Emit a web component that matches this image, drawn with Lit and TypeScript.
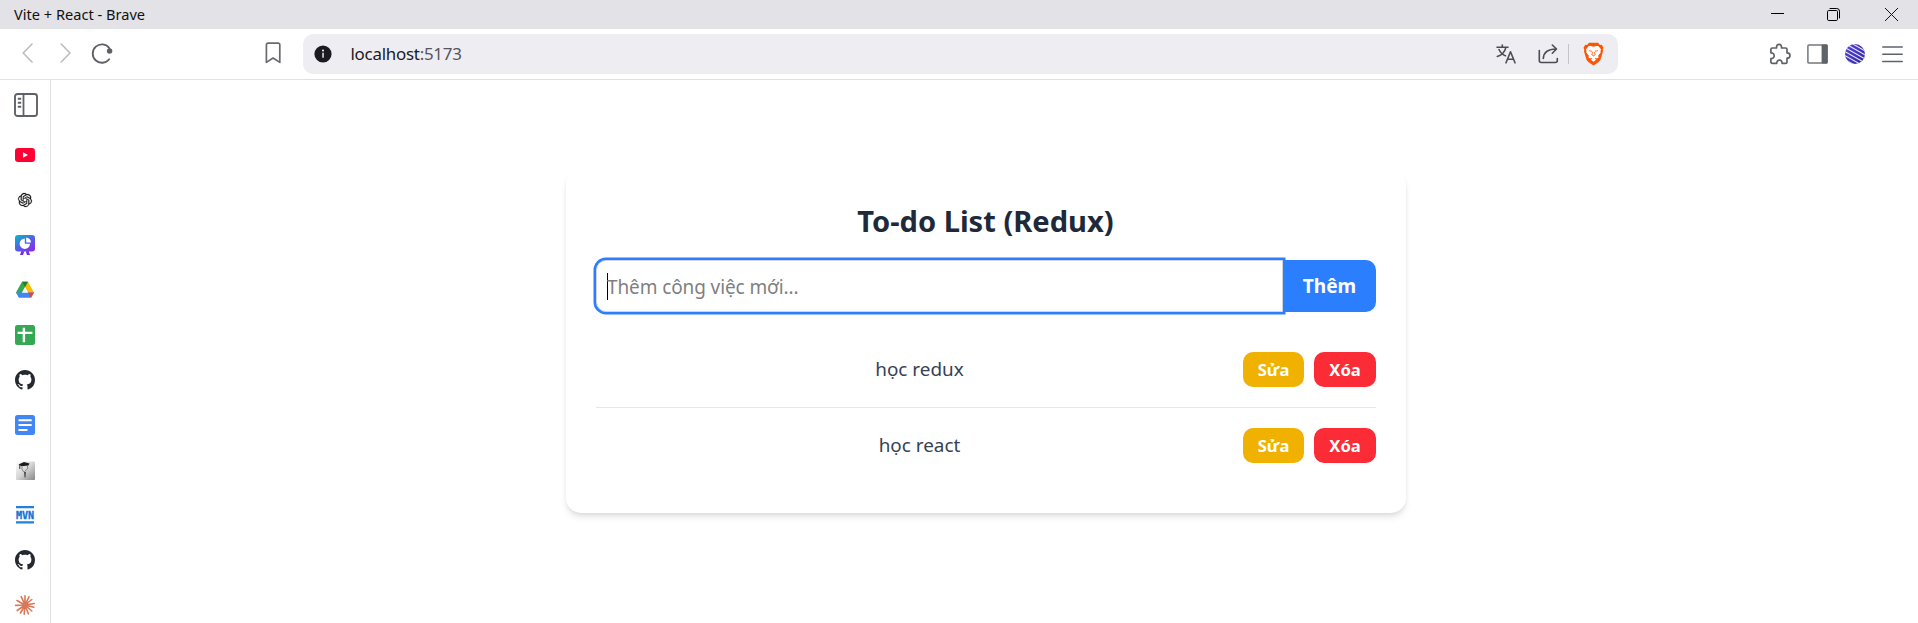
import { LitElement, html, css, svg } from "lit";
import { customElement, property, state } from "lit/decorators.js";

const GITHUB =
  "M8 0C3.58 0 0 3.58 0 8c0 3.54 2.29 6.53 5.47 7.59.4.07.55-.17.55-.38 0-.19-.01-.82-.01-1.49-2.01.37-2.53-.49-2.69-.94-.09-.23-.48-.94-.82-1.13-.28-.15-.68-.52-.01-.53.63-.01 1.08.58 1.23.82.72 1.21 1.87.87 2.33.66.07-.52.28-.87.51-1.07-1.78-.2-3.64-.89-3.64-3.95 0-.87.31-1.59.82-2.15-.08-.2-.36-1.02.08-2.12 0 0 .67-.21 2.2.82.64-.18 1.32-.27 2-.27.68 0 1.36.09 2 .27 1.53-1.04 2.2-.82 2.2-.82.44 1.1.16 1.92.08 2.12.51.56.82 1.27.82 2.15 0 3.07-1.87 3.75-3.65 3.95.29.25.54.73.54 1.48 0 1.07-.01 1.93-.01 2.2 0 .21.15.46.55.38A8.013 8.013 0 0 0 16 8c0-4.42-3.58-8-8-8z";
const KNOT =
  "M22.2819 9.8211a5.9847 5.9847 0 0 0-.5157-4.9108 6.0462 6.0462 0 0 0-6.5098-2.9A6.0651 6.0651 0 0 0 4.9807 4.1818a5.9847 5.9847 0 0 0-3.9977 2.9 6.0462 6.0462 0 0 0 .7427 7.0966 5.98 5.98 0 0 0 .511 4.9107 6.051 6.051 0 0 0 6.5146 2.9001A5.9847 5.9847 0 0 0 13.2599 24a6.0557 6.0557 0 0 0 5.7718-4.2058 5.9894 5.9894 0 0 0 3.9977-2.9001 6.0557 6.0557 0 0 0-.7475-7.0729zm-9.022 12.6081a4.4755 4.4755 0 0 1-2.8764-1.0408l.1419-.0804 4.7783-2.7582a.7948.7948 0 0 0 .3927-.6813v-6.7369l2.02 1.1686a.071.071 0 0 1 .038.052v5.5826a4.504 4.504 0 0 1-4.4945 4.4944zm-9.6607-4.1254a4.4708 4.4708 0 0 1-.5346-3.0137l.142.0852 4.783 2.7582a.7712.7712 0 0 0 .7806 0l5.8428-3.3685v2.3324a.0804.0804 0 0 1-.0332.0615L9.74 19.9502a4.4992 4.4992 0 0 1-6.1408-1.6464zM2.3408 7.8956a4.485 4.485 0 0 1 2.3655-1.9728V11.6a.7664.7664 0 0 0 .3879.6765l5.8144 3.3543-2.0201 1.1685a.0757.0757 0 0 1-.071 0l-4.8303-2.7865A4.504 4.504 0 0 1 2.3408 7.872zm16.5963 3.8558L13.1038 8.364 15.1192 7.2a.0757.0757 0 0 1 .071 0l4.8303 2.7913a4.4944 4.4944 0 0 1-.6765 8.1042v-5.6772a.79.79 0 0 0-.407-.667zm2.0107-3.0231l-.142-.0852-4.7735-2.7818a.7759.7759 0 0 0-.7854 0L9.409 9.2297V6.8974a.0662.0662 0 0 1 .0284-.0615l4.8303-2.7866a4.4992 4.4992 0 0 1 6.6802 4.66zM8.3065 12.863l-2.02-1.1638a.0804.0804 0 0 1-.038-.0567V6.0742a4.4992 4.4992 0 0 1 7.3757-3.4537l-.142.0805L8.704 5.459a.7948.7948 0 0 0-.3927.6813zm1.0976-2.3654l2.602-1.4998 2.6069 1.4998v2.9994l-2.5974 1.4997-2.6067-1.4997Z";

const line = (d: string, color = "#5f6066", w = 1.6) =>
  svg`<path d=${d} fill="none" stroke=${color} stroke-width=${w} stroke-linecap="round" stroke-linejoin="round"/>`;

// Every glyph is [width, height, shapes].
const ICONS: Record<string, [number, number, unknown]> = {
  minimize: [13, 13, svg`<rect x="0" y="5" width="13" height="1" fill="#000"/>`],
  restore: [13, 13, svg`
    <rect x=".5" y="2.5" width="10" height="10" rx="1.2" fill="none" stroke="#000"/>
    <path d="M2.6.5h7.2a2.7 2.7 0 0 1 2.7 2.7v7.2" fill="none" stroke="#000"/>`],
  close: [13, 13, line("M.3.3 12.7 12.7M12.7.3.3 12.7", "#111", 1)],
  back: [12, 20, line("M10 1 1.2 10 10 19", "#bcbcbe", 1.6)],
  forward: [12, 20, line("M1.2 1 10 10l-8.800 9", "#bcbcbe", 1.6)],
  reload: [22, 22, svg`
    ${line("M18.200 17.200A9.200 9.200 0 1 1 18.400 6.200", "#5f6066", 1.800)}
    <circle cx="18.600" cy="9" r="2.700" fill="#5f6066"/>`],
  bookmark: [16, 22, line("M3 1.200h10.200a1.600 1.600 0 0 1 1.600 1.600V20.400L8.100 16 1.400 20.400V2.800A1.600 1.600 0 0 1 3 1.200Z", "#6a6b71", 1.700)],
  info: [18, 18, svg`
    <circle cx="9" cy="9" r="8.600" fill="#1b1a21"/>
    <circle cx="9" cy="5.600" r="1" fill="#fff"/><rect x="8.300" y="7.700" width="1.500" height="5" fill="#e6e6ea"/>`],
  translate: [20, 20, svg`
    ${line("M1 3.300h11M6.300 1v2.300M3 5.500c1.500 3.300 4 5.500 6.500 6.200M9.800 3.600C8.800 8 5.500 11.200 1.300 12.400", "#4c4c52", 1.600)}
    ${line("M10 18.800 14.500 7.800 19 18.800M11.500 15.300h6", "#4c4c52", 1.600)}`],
  share: [21, 20, svg`
    ${line("M1.300 6.500V16.500a2 2 0 0 0 2 2h14a2 2 0 0 0 2-2V14.500", "#4c4c52", 1.600)}
    ${line("M5.300 14.500C5.600 8.500 9.500 5 18.300 5M14.300 1l4.200 4-4.200 4.200", "#4c4c52", 1.600)}`],
  shield: [21, 24, svg`
    <path d="M6 .8h9l2 2.200 1.800-.3 1.700 3-.8 2L20 9.500 17.700 17c-.4 1.400-1.200 2.400-2.400 3.200l-3.600 2.500a2 2 0 0 1-2.400 0l-3.600-2.500A5.500 5.500 0 0 1 3.300 17L1 9.500l.3-1.800-.8-2 1.700-3L4 3Z" fill="#ff5500"/>
    <path d="M10.500 4.700 13 4l2.300 0L18 7.200l-.5 2 .2 1.300-2.600 3.200.5 1.500-1.500 1.300-1.600-.5-.7.800 1.400 1-2.700 2-2.700-2 1.400-1-.7-.8-1.600.5-1.500-1.300.5-1.500-2.600-3.200.2-1.300-.5-2L5.700 4 8 4Z" fill="#fff"/>
    <path d="M6 8.600l3 .7M15 8.600l-3 .7M9.600 9.800l-.7 3.200 1.600.9 1.600-.9-.7-3.200" fill="none" stroke="#ff5500" stroke-width=".8"/>`],
  puzzle: [22, 22, line("M3.300 5h4.300c-.3-2.400.8-3.700 2.400-3.700s2.800 1.300 2.500 3.700h4.200c.8 0 1.300.5 1.300 1.300v3.500c2 0 3 1 3 2.600S20 15.200 18 15.200v3.700c0 .9-.5 1.400-1.300 1.400h-3.600c.1-2-.9-3.200-2.600-3.200s-2.800 1.200-2.700 3.200H3.300c-.9 0-1.400-.5-1.400-1.400V15.500c2 .1 3.300-1 3.300-2.800s-1.300-2.900-3.300-2.800V6.300c0-.8.5-1.300 1.400-1.300Z", "#5f6368", 1.700)],
  sidepanel: [21, 20, svg`
    <rect x=".9" y=".9" width="19.200" height="18.200" rx="1.200" fill="none" stroke="#74777b" stroke-width="1.500"/>
    <rect x="14.600" y=".5" width="6" height="19" rx="1" fill="#5f6368"/>`],
  avatar: [20, 20, svg`
    <defs><clipPath id="disc"><circle cx="10" cy="10" r="10"/></clipPath>
    <linearGradient id="ink" x1="0" y1="0" x2="1" y2="1"><stop offset="0" stop-color="#5546dd"/><stop offset="1" stop-color="#2f2599"/></linearGradient></defs>
    <g clip-path="url(#disc)"><rect width="20" height="20" fill="url(#ink)"/>
    <path d="M-2-5.600 22 8M-2-1.600 22 12M-2 2.400 22 16M-2 6.400 22 20M-2 10.400 22 24M-2 14.400 22 28" stroke="#e9e7fb" stroke-width="1.100"/></g>`],
  menu: [21, 18, line("M.8 2h19.400M.8 9.300h19.400M.8 16.500h19.400", "#5f6368", 1.600)],
  tabs: [24, 24, svg`
    <rect x="1" y="1" width="22" height="22" rx="2.500" fill="none" stroke="#5f6368" stroke-width="1.900"/>
    <path d="M9.500 1v22" stroke="#5f6368" stroke-width="1.800"/>
    <path d="M3.800 5.800h3.400M3.800 9.800h3.400M3.800 13.800h3.400" stroke="#5f6368" stroke-width="2"/>`],
  youtube: [20, 20, svg`<rect y="3" width="20" height="14" rx="3.200" fill="#ff0033"/><path d="M8 7.200v5.600l5-2.800Z" fill="#fff"/>`],
  knot: [20, 20, svg`<g transform="translate(3 3) scale(.583)"><path d=${KNOT} fill="#111" stroke="#111" stroke-width=".35"/></g>`],
  slides: [20, 20, svg`
    <defs><linearGradient id="deck" x1="0" y1="0" x2=".8" y2="1"><stop offset="0" stop-color="#04bfc4"/><stop offset=".5" stop-color="#4a67ea"/><stop offset="1" stop-color="#8a2be8"/></linearGradient></defs>
    <rect width="20" height="16.500" rx="3" fill="url(#deck)"/>
    <path d="M6.500 16 5 20h3l1.300-3.500ZM13.500 16 15 20h-3l-1.300-3.500Z" fill="#6d2ee6"/>
    <path d="M9.800 3.500V8.800H15A5.200 5.200 0 1 1 9.800 3.500Z" fill="#fff"/>
    <path d="M11.200 2.500a5 5 0 0 1 4.800 4.900h-4.800Z" fill="#fff"/>`],
  drive: [20, 20, svg`
    <path d="M7 1.800h6L4.300 17.800 1 12.600Z" fill="#34a853"/>
    <path d="M13 1.800l6 10.800h-6L7 1.800Z" fill="#fbbc04"/>
    <path d="M7 1.800h6L10 7.200Z" fill="#188038"/>
    <path d="M1 12.600h18l-3 5.200H4Z" fill="#4285f4"/>
    <path d="M13 12.600h6l-3 5.200Z" fill="#ea4335"/>
    <path d="M10 7.200 13 12.600H7Z" fill="#fff"/>`],
  sheets: [20, 20, svg`<rect width="20" height="20" rx="2.500" fill="#34a853"/><path d="M8.900 2.800v14.400M2.600 7.900h14.800" stroke="#fff" stroke-width="2.400"/>`],
  github: [20, 20, svg`<g transform="scale(1.250)"><path d=${GITHUB} fill="#24292f"/></g>`],
  docs: [20, 20, svg`<rect width="20" height="20" rx="2.500" fill="#4285f4"/><path d="M3.500 5.300h13.200M3.500 10.100h13.200M3.500 14.900h9" stroke="#fff" stroke-width="2"/>`],
  scholar: [20, 20, svg`
    <defs><linearGradient id="steel" x1="0" y1="0" x2="1" y2="1"><stop offset="0" stop-color="#fff"/><stop offset=".5" stop-color="#d4d4d4"/><stop offset="1" stop-color="#858585"/></linearGradient></defs>
    <rect x="1" y="1.500" width="19" height="18.500" rx="1" fill="url(#steel)"/>
    <path d="M3.500 4.500 9 2l5.500 1.500-1 2-7 .8Z" fill="#1c1c1c"/>
    <path d="M4.800 5v4" stroke="#333"/>
    <path d="M7 6.500c-.3 3 .6 4.500 2.200 5.500L12.800 8.500 12.500 6" fill="none" stroke="#777" stroke-width=".9"/>
    <path d="M9.200 12h1.600l-.3 5.500h-.9Z" fill="#333"/>`],
  mvn: [20, 20, svg`
    <path d="M1 2.200h18M1 17.300h18" stroke="#1f80de" stroke-width="2.300"/>
    <text x=".9" y="13.500" textLength="18.200" lengthAdjust="spacingAndGlyphs" font-family="DejaVu Sans Mono, monospace" font-weight="700" font-size="10" fill="#1272d4" stroke="#1272d4" stroke-width=".3">MVN</text>`],
  burst: [20, 20, svg`<path d="M10 10V.8M10 10 14 1.800M10 10l6.800-5.500M10 10l9.300-1.500M10 10l8.800 2.300M10 10l6.800 6M10 10l3.300 8.800M10 10l-.8 9.300M10 10l-4.500 8M10 10l-7.800 5.500M10 10 .6 10.400M10 10 2 5.500M10 10 6.200 1.600" stroke="#d97757" stroke-width="1.600" stroke-linecap="round"/>`],
};

@customElement("ui-icon")
export class UiIcon extends LitElement {
  @property() name = "";
  static styles = css`
    :host { display: block; flex: none; }
    svg { display: block; overflow: visible; }
  `;
  render() {
    const [w, h, shapes] = ICONS[this.name];
    return html`<svg width=${w} height=${h} viewBox="0 0 ${w} ${h}" aria-hidden="true">${shapes}</svg>`;
  }
}

@customElement("browser-bar")
export class BrowserBar extends LitElement {
  static styles = css`
    :host { display: block; }
    .title { height: 29px; box-sizing: border-box; background: #e3e2e7; display: flex; align-items: center; padding: 0 20px 0 14px; font-size: 14.600px; color: #111; }
    .name { flex: 1; padding-bottom: 2px; }
    .window { display: flex; }
    .restore { margin: 0 45px 0 43px; }
    .tools { height: 51px; box-sizing: border-box; border-bottom: 1px solid #e1e1e4; display: flex; align-items: center; padding: 0 15px 0 22px; background: #fff; }
    .nav { display: flex; align-items: center; width: 243px; padding-bottom: 2px; }
    .fwd { margin-left: 26px; }
    .reload { margin-left: 19px; }
    .mark { padding-bottom: 2px; }
    .address { width: 1315px; height: 40px; margin-left: 22px; box-sizing: border-box; border-radius: 10px; background: #eeedf2; display: flex; align-items: center; padding: 0 14px 0 11px; }
    .url { flex: 1; margin-left: 18.500px; padding-bottom: 2px; font-size: 16.900px; letter-spacing: -.250px; color: #1b1a21; }
    .port { color: #55555e; }
    .share { margin-left: 21.500px; }
    .rule { width: 1px; height: 20px; margin: 0 14px 0 9.500px; background: #c3c4ca; }
    .right { margin-left: auto; display: flex; align-items: center; gap: 17px; }
    .puzzle { margin-right: -1px; }
  `;
  render() {
    return html`
      <div class="title">
        <span class="name">Vite + React - Brave</span>
        <div class="window">
          <ui-icon name="minimize"></ui-icon><ui-icon class="restore" name="restore"></ui-icon><ui-icon name="close"></ui-icon>
        </div>
      </div>
      <div class="tools">
        <div class="nav">
          <ui-icon name="back"></ui-icon>
          <ui-icon class="fwd" name="forward"></ui-icon>
          <ui-icon class="reload" name="reload"></ui-icon>
        </div>
        <ui-icon class="mark" name="bookmark"></ui-icon>
        <div class="address">
          <ui-icon name="info"></ui-icon>
          <span class="url">localhost<span class="port">:5173</span></span>
          <ui-icon name="translate"></ui-icon>
          <ui-icon class="share" name="share"></ui-icon>
          <div class="rule"></div>
          <ui-icon name="shield"></ui-icon>
        </div>
        <div class="right">
          <ui-icon class="puzzle" name="puzzle"></ui-icon><ui-icon name="sidepanel"></ui-icon>
          <ui-icon name="avatar"></ui-icon><ui-icon name="menu"></ui-icon>
        </div>
      </div>`;
  }
}

@customElement("side-strip")
export class SideStrip extends LitElement {
  static styles = css`
    :host { display: flex; flex-direction: column; align-items: center; box-sizing: border-box; width: 51px; height: 543px; overflow: hidden; border-right: 1px solid #e1e1e4; background: #fff; }
    .toggle { margin: 13px 0 28px 1px; }
    .sites { display: flex; flex-direction: column; gap: 25px; }
  `;
  render() {
    const sites = ["youtube", "knot", "slides", "drive", "sheets", "github", "docs", "scholar", "mvn", "github", "burst"];
    return html`
      <ui-icon class="toggle" name="tabs"></ui-icon>
      <div class="sites">${sites.map((s) => html`<ui-icon name=${s}></ui-icon>`)}</div>`;
  }
}

@customElement("todo-card")
export class TodoCard extends LitElement {
  @state() private todos = ["học redux", "học react"];
  static styles = css`
    :host { display: block; box-sizing: border-box; width: 840px; padding: 30px; border-radius: 15px; background: #fff; box-shadow: 0 5px 7.500px -1.250px rgba(0,0,0,.1), 0 2.500px 5px -2.500px rgba(0,0,0,.1); }
    h1 { margin: 0 0 19px; padding: 1px 1px 0 0; font-size: 29.100px; line-height: 40px; font-weight: 700; text-align: center; color: #1e2939; }
    .entry { display: flex; height: 52px; margin-bottom: 20px; }
    .field { flex: 1; min-width: 0; position: relative; z-index: 1; box-sizing: border-box; border: 1px solid #d1d5dc; border-radius: 10px 0 0 10px; display: flex; align-items: center; padding-left: 10px; font-size: 19px; letter-spacing: -.110px; color: #7f7f7f; box-shadow: 0 0 0 2.500px #2b7fff; background: #fff; }
    .hint { padding-top: 1px; }
    .caret { width: 1px; height: 27px; margin-right: -1px; background: #000; }
    button { border: 0; padding: 0; color: #fff; font-family: inherit; font-weight: 700; }
    .add { width: 93px; border-radius: 0 10px 10px 0; background: #2b7fff; font-size: 19.100px; }
    ul { list-style: none; margin: 0; padding: 0; }
    li { display: flex; align-items: center; padding: 20px 0; }
    li + li { border-top: 1px solid #e5e7eb; }
    .task { flex: 1; text-align: center; font-size: 18.900px; line-height: 35px; color: #364153; }
    .actions { display: flex; gap: 10px; }
    .actions button { height: 35px; border-radius: 10px; font-size: 16.600px; }
    .edit { width: 61px; background: #f0b100; }
    .remove { width: 62px; background: #fb2c36; }
  `;
  render() {
    return html`
      <h1>To-do List (Redux)</h1>
      <div class="entry">
        <div class="field"><span class="caret"></span><span class="hint">Thêm công việc mới...</span></div>
        <button class="add">Thêm</button>
      </div>
      <ul>
        ${this.todos.map((t) => html`<li>
          <span class="task">${t}</span>
          <div class="actions"><button class="edit">Sửa</button><button class="remove">Xóa</button></div>
        </li>`)}
      </ul>`;
  }
}

@customElement("app-root")
export class AppRoot extends LitElement {
  static styles = css`
    :host { display: block; width: 100%; height: 623px; overflow: hidden; background: #fff; font-family: "Noto Sans", "Open Sans", sans-serif; }
    .body { display: flex; }
    main { flex: 1; box-sizing: border-box; padding: 90px 0 0 3px; display: flex; justify-content: center; align-items: flex-start; }
  `;
  render() {
    return html`
      <browser-bar></browser-bar>
      <div class="body">
        <side-strip></side-strip>
        <main><todo-card></todo-card></main>
      </div>`;
  }
}
